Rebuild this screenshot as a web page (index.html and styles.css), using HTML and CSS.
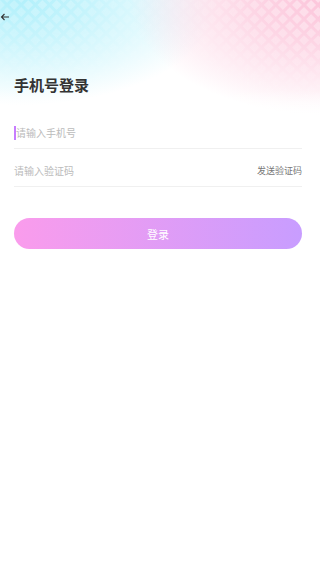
FILE: index.html
```html
<!DOCTYPE html>
<html lang="zh">
<head>
<meta charset="utf-8">
<link rel="stylesheet" href="styles.css">
</head>
<body>
<div class="page">
  <div class="bg">
    <div class="bg-cyan"></div>
    <div class="bg-pink"></div>
    <svg class="bg-pattern" width="320" height="120" viewBox="0 0 320 120">
      <defs>
        <pattern id="dia" patternUnits="userSpaceOnUse" width="10" height="10" patternTransform="rotate(45)">
          <rect x="0" y="0" width="7" height="7" fill="#fff"/>
        </pattern>
        <radialGradient id="gl" cx="40" cy="0" r="150" gradientUnits="userSpaceOnUse" gradientTransform="translate(40 0) scale(1 0.6) translate(-40 0)">
          <stop offset="0" stop-color="#fff" stop-opacity="0.5"/>
          <stop offset="1" stop-color="#fff" stop-opacity="0"/>
        </radialGradient>
        <radialGradient id="gr" cx="320" cy="0" r="160" gradientUnits="userSpaceOnUse" gradientTransform="translate(320 0) scale(1 0.65) translate(-320 0)">
          <stop offset="0" stop-color="#fff" stop-opacity="0.8"/>
          <stop offset="1" stop-color="#fff" stop-opacity="0"/>
        </radialGradient>
        <mask id="m">
          <rect width="320" height="120" fill="url(#gl)"/>
          <rect width="320" height="120" fill="url(#gr)"/>
        </mask>
      </defs>
      <rect width="320" height="120" fill="url(#dia)" mask="url(#m)" opacity="0.55"/>
    </svg>
    <div class="bg-fade"></div>
  </div>
  <div class="nav">
    <svg class="back" width="10" height="10" viewBox="0 0 10 10"><path d="M9 5H1.5M4.5 2L1.5 5L4.5 8" fill="none" stroke="#333" stroke-width="1.1"/></svg>
  </div>
  <h1 class="title">手机号登录</h1>
  <div class="field first">
    <span class="caret"></span><span class="ph">请输入手机号</span>
  </div>
  <div class="field">
    <span class="ph">请输入验证码</span>
    <span class="send">发送验证码</span>
  </div>
  <button class="btn">登录</button>
</div>
</body>
</html>
```
FILE: styles.css
```css
* { box-sizing: border-box; }
html, body { margin: 0; padding: 0; background: #fff; }
body { font-family: "Noto Sans CJK SC", "Noto Sans", sans-serif; }
.page { position: relative; width: 320px; height: 580px; overflow: hidden; padding: 0 18px 0 14px; }
.bg { position: absolute; left: 0; top: 0; width: 320px; height: 120px; z-index: 0; }
.bg-cyan { position: absolute; inset: 0; background: radial-gradient(ellipse 200px 105px at 20px 0, #b2f0fb 0%, #c6f4fc 35%, rgba(255,255,255,0) 100%); }
.bg-pink { position: absolute; inset: 0; background: radial-gradient(ellipse 200px 115px at 330px 0, #fcc4da 0%, #fdd6e5 40%, rgba(255,255,255,0) 100%); }
.bg-pattern { position: absolute; left: 0; top: 0; display: block; }
.bg-fade { position: absolute; left: 0; right: 0; bottom: 0; height: 30px; background: linear-gradient(to bottom, rgba(255,255,255,0), #fff); }
.nav { position: relative; z-index: 1; height: 34px; padding-top: 12px; margin-left: -14px; }
.back { display: block; }
.title { position: relative; z-index: 1; margin: 40px 0 0; font-size: 15px; line-height: 22px; font-weight: 700; color: #333; }
.field { position: relative; z-index: 1; display: flex; align-items: center; height: 38px; padding-top: 6px; border-bottom: 1px solid #f0f0f0; }
.field.first { margin-top: 15px; }
.caret { width: 2px; height: 14px; background: #c77dff; }
.ph { font-size: 10px; color: #bbb; flex: 1; }
.send { font-size: 9px; color: #777; }
.btn { position: relative; z-index: 1; display: block; width: 288px; height: 31px; margin-top: 31px; border: none; border-radius: 16px; background: linear-gradient(to right, #fa9cec, #c89dff); color: #fff; font-family: "Noto Sans CJK SC", sans-serif; font-size: 11px; padding: 0; }
```
